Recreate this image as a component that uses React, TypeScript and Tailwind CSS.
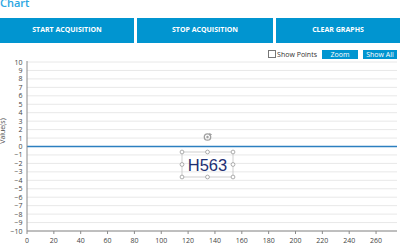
import React from "react";

const yVals = Array.from({ length: 21 }, (_, i) => 10 - i);
const xVals = Array.from({ length: 14 }, (_, i) => i * 20);
const yOf = (v: number) => 146.5 - v * 8.45;
const xOf = (v: number) => 27 + v * 1.3425;

export default function App() {
  return (
    <div className="w-[400px] h-[247px] overflow-hidden bg-white" style={{ fontFamily: '"Open Sans", "DejaVu Sans", sans-serif' }}>
      <div className="h-[18px] overflow-hidden">
        <div className="text-[11px] leading-[12px] font-semibold text-[#2aa6e2] -mt-[3px]">Chart</div>
      </div>
      <div className="flex h-[25px] gap-[3px]">
        <button className="w-[134px] bg-[#0195d0] text-white text-[7px] font-bold flex items-center justify-center">START ACQUISITION</button>
        <button className="w-[136px] bg-[#0195d0] text-white text-[7px] font-bold flex items-center justify-center">STOP ACQUISITION</button>
        <button className="flex-1 bg-[#0195d0] text-white text-[7px] font-bold flex items-center justify-center">CLEAR GRAPHS</button>
      </div>
      <div className="flex items-center justify-end h-[10px] mt-[6px] pr-[3px]">
        <div className="w-[8px] h-[8px] border border-[#777] bg-white mr-[1px]" />
        <span className="text-[7px] text-[#333] leading-none mr-[5px]">Show Points</span>
        <div className="w-[36px] h-[9px] bg-[#0195d0] text-white text-[7px] leading-none flex items-center justify-center mr-[5px]">Zoom</div>
        <div className="w-[34px] h-[9px] bg-[#0195d0] text-white text-[7px] leading-none flex items-center justify-center">Show All</div>
      </div>
      <svg width="400" height="188" viewBox="0 59 400 188" className="block">
        {yVals.map((v) => (
          <line key={"g" + v} x1={27} x2={397} y1={yOf(v)} y2={yOf(v)} stroke="#e8e8e8" strokeWidth={1} />
        ))}
        <line x1={27} x2={397} y1={146.5} y2={146.5} stroke="#2c7fc0" strokeWidth={1.4} />
        <line x1={27} x2={27} y1={61} y2={231} stroke="#8a8a8a" strokeWidth={1} />
        <line x1={27} x2={397} y1={231} y2={231} stroke="#8a8a8a" strokeWidth={1} />
        {yVals.map((v) => (
          <text key={"y" + v} x={22.5} y={yOf(v) + 2.5} textAnchor="end" fontSize={7} fill="#444" fontFamily="Open Sans, sans-serif">
            {v < 0 ? "\u2212" + Math.abs(v) : String(v)}
          </text>
        ))}
        {xVals.map((v) => (
          <g key={"x" + v}>
            <line x1={xOf(v)} x2={xOf(v)} y1={231} y2={234} stroke="#8a8a8a" strokeWidth={1} />
            <text x={xOf(v)} y={243} textAnchor="middle" fontSize={7} fill="#444" fontFamily="Open Sans, sans-serif">
              {v}
            </text>
          </g>
        ))}
        <text x={201} y={252} textAnchor="middle" fontSize={7} fill="#444" fontFamily="Open Sans, sans-serif">Time(s)</text>
        <text transform="translate(5 131) rotate(-90)" textAnchor="middle" fontSize={7} fill="#444" fontFamily="Open Sans, sans-serif">Value(s)</text>
        <rect x={182} y={152} width={51} height={25} fill="none" stroke="#c4c4c4" strokeWidth={0.8} />
        <text x={207.5} y={170.7} textAnchor="middle" fontSize={16.5} fill="#1d2f73" fontFamily="Liberation Sans, Arial, sans-serif">H563</text>
        {[
          [182, 152], [207.5, 152], [233, 152],
          [182, 164.5], [233, 164.5],
          [182, 177], [207.5, 177], [233, 177],
        ].map(([cx, cy], i) => (
          <circle key={"h" + i} cx={cx} cy={cy} r={1.9} fill="#fff" stroke="#999" strokeWidth={0.8} />
        ))}
        <g transform="translate(207.5 137)">
          <circle r={3.2} fill="none" stroke="#a0a0a0" strokeWidth={1.3} />
          <circle r={1.2} fill="#a0a0a0" />
          <path d="M1.8 -4.3 L4.6 -2.4 L2 -1.1 Z" fill="#a0a0a0" />
        </g>
      </svg>
    </div>
  );
}
